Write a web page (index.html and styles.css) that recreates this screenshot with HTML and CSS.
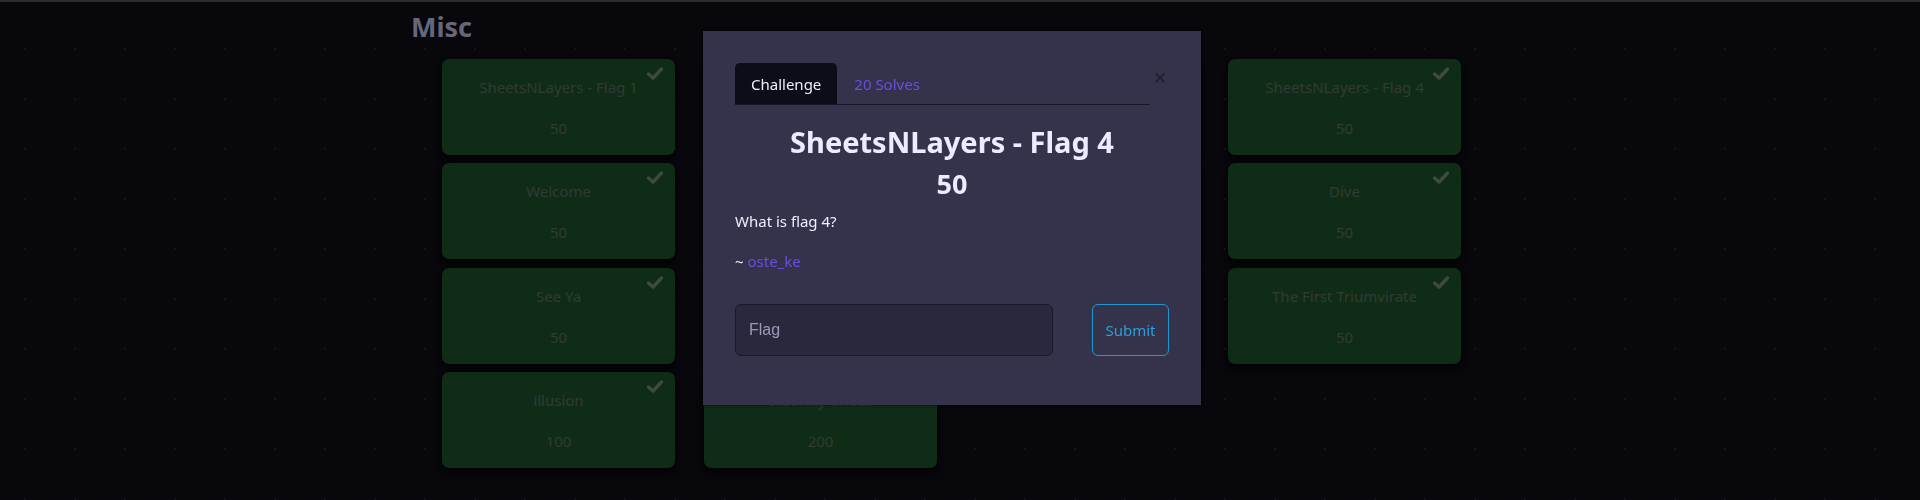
FILE: index.html
```html
<!DOCTYPE html>
<html lang="en">
<head>
<meta charset="utf-8">
<title>Misc</title>
<link rel="stylesheet" href="styles.css">
</head>
<body>
<div class="page">
  <h2 class="category">Misc</h2>
  <div class="grid">
    <div class="card"><svg class="check" viewBox="0 0 16 12"><path d="M1.5 6.5 L6 10.5 L14.5 1.5"/></svg><div class="card-title">SheetsNLayers - Flag 1</div><div class="card-value">50</div></div>
    <div class="card"><svg class="check" viewBox="0 0 16 12"><path d="M1.5 6.5 L6 10.5 L14.5 1.5"/></svg><div class="card-title">SheetsNLayers - Flag 2</div><div class="card-value">50</div></div>
    <div class="card"><svg class="check" viewBox="0 0 16 12"><path d="M1.5 6.5 L6 10.5 L14.5 1.5"/></svg><div class="card-title">SheetsNLayers - Flag 3</div><div class="card-value">50</div></div>
    <div class="card"><svg class="check" viewBox="0 0 16 12"><path d="M1.5 6.5 L6 10.5 L14.5 1.5"/></svg><div class="card-title">SheetsNLayers - Flag 4</div><div class="card-value">50</div></div>
    <div class="card"><svg class="check" viewBox="0 0 16 12"><path d="M1.5 6.5 L6 10.5 L14.5 1.5"/></svg><div class="card-title">Welcome</div><div class="card-value">50</div></div>
    <div class="card"><svg class="check" viewBox="0 0 16 12"><path d="M1.5 6.5 L6 10.5 L14.5 1.5"/></svg><div class="card-title">Discord</div><div class="card-value">50</div></div>
    <div class="card"><svg class="check" viewBox="0 0 16 12"><path d="M1.5 6.5 L6 10.5 L14.5 1.5"/></svg><div class="card-title">Survey</div><div class="card-value">50</div></div>
    <div class="card"><svg class="check" viewBox="0 0 16 12"><path d="M1.5 6.5 L6 10.5 L14.5 1.5"/></svg><div class="card-title">Dive</div><div class="card-value">50</div></div>
    <div class="card"><svg class="check" viewBox="0 0 16 12"><path d="M1.5 6.5 L6 10.5 L14.5 1.5"/></svg><div class="card-title">See Ya</div><div class="card-value">50</div></div>
    <div class="card"><svg class="check" viewBox="0 0 16 12"><path d="M1.5 6.5 L6 10.5 L14.5 1.5"/></svg><div class="card-title">Rules</div><div class="card-value">50</div></div>
    <div class="card"><svg class="check" viewBox="0 0 16 12"><path d="M1.5 6.5 L6 10.5 L14.5 1.5"/></svg><div class="card-title">Sanity Check</div><div class="card-value">50</div></div>
    <div class="card"><svg class="check" viewBox="0 0 16 12"><path d="M1.5 6.5 L6 10.5 L14.5 1.5"/></svg><div class="card-title">The First Triumvirate</div><div class="card-value">50</div></div>
    <div class="card"><svg class="check" viewBox="0 0 16 12"><path d="M1.5 6.5 L6 10.5 L14.5 1.5"/></svg><div class="card-title">illusion</div><div class="card-value">100</div></div>
    <div class="card"><div class="card-title">Insanity Check</div><div class="card-value">200</div></div>
  </div>
</div>

<div class="modal">
  <div class="modal-header">
    <div class="tabs">
      <div class="tab active">Challenge</div>
      <div class="tab link">20 Solves</div>
    </div>
    <div class="close">&#x2715;</div>
  </div>
  <h3 class="modal-title">SheetsNLayers - Flag 4</h3>
  <div class="modal-value">50</div>
  <p class="desc">What is flag 4?</p>
  <p class="author">~ <span class="author-name">oste_ke</span></p>
  <div class="submit-row">
    <div class="flag-input">Flag</div>
    <div class="submit-btn">Submit</div>
  </div>
</div>
</body>
</html>
```
FILE: styles.css
```css
html, body {
  margin: 0;
  padding: 0;
}
body {
  background-color: #07070c;
  background-image: radial-gradient(circle, #13131b 0.9px, transparent 1.3px);
  background-size: 50px 50px;
  background-position: 0px 24px;
  border-top: 2px solid #2b2b30;
  height: 498px;
  overflow: hidden;
  font-family: "Noto Sans", "Open Sans", sans-serif;
}
.page {
  padding-left: 411px;
}
.category {
  margin: 0;
  padding-top: 7px;
  height: 50px;
  font-size: 27px;
  line-height: 36px;
  font-weight: 700;
  color: #67677c;
}
.grid {
  margin-left: 31px;
  display: grid;
  grid-template-columns: repeat(4, 233px);
  grid-auto-rows: 96px;
  column-gap: 29px;
  row-gap: 8.4px;
}
.card {
  position: relative;
  background: #0f2d16;
  border-radius: 7px;
  box-shadow: 0 4px 6px rgba(0, 0, 0, 0.75);
  text-align: center;
  color: #323a34;
  font-size: 15px;
}
.check {
  position: absolute;
  right: 12px;
  top: 8px;
  width: 16px;
  height: 13px;
  fill: none;
  stroke: #3e4a40;
  stroke-width: 3.4;
  stroke-linecap: round;
  stroke-linejoin: round;
}
.card-title {
  padding-top: 17px;
  line-height: 22px;
}
.card-value {
  padding-top: 19px;
  line-height: 22px;
}
.modal {
  position: fixed;
  left: 703px;
  top: 31px;
  width: 434px;
  height: 342px;
  padding: 32px 32px 0 32px;
  background: #34334b;
  box-shadow: 0 0 2px rgba(0, 0, 0, 0.8);
}
.modal-header {
  display: flex;
  align-items: flex-start;
}
.tabs {
  display: flex;
  width: 417px;
  border-bottom: 1px solid #17172a;
}
.tab {
  height: 41px;
  line-height: 43px;
  padding: 0 16px;
  font-size: 15px;
  border-radius: 5px 5px 0 0;
}
.tab.active {
  background: #0d0d18;
  color: #efeeff;
}
.tab.link {
  color: #6a4ee2;
  padding-left: 17px;
}
.close {
  margin-left: 1px;
  width: 18px;
  padding-top: 4px;
  font-size: 17px;
  line-height: 22px;
  color: #1e1e2c;
  text-align: center;
}
.modal-title {
  margin: 17px 0 0 0;
  text-align: center;
  font-size: 29px;
  line-height: 40px;
  font-weight: 700;
  color: #ecebff;
}
.modal-value {
  margin-top: 4px;
  text-align: center;
  font-size: 27px;
  line-height: 36px;
  font-weight: 700;
  color: #ecebff;
}
.desc {
  margin: 9px 0 0 0;
  font-size: 15px;
  line-height: 20px;
  color: #eeeeff;
}
.author {
  margin: 20px 0 0 0;
  font-size: 15px;
  line-height: 20px;
  color: #eeeeff;
}
.author-name {
  color: #6a4ee2;
}
.submit-row {
  margin-top: 33px;
  display: flex;
  justify-content: space-between;
}
.flag-input {
  box-sizing: border-box;
  width: 318px;
  height: 52px;
  padding-left: 13px;
  line-height: 50px;
  background: #29283d;
  border: 1px solid #19192a;
  border-radius: 6px;
  color: #9a99b8;
  font-size: 16px;
  font-family: "Liberation Sans", Arial, sans-serif;
}
.submit-btn {
  box-sizing: border-box;
  width: 77px;
  height: 52px;
  line-height: 50px;
  text-align: center;
  border: 1px solid #1c98d4;
  border-radius: 6px;
  color: #2a9fd8;
  font-size: 15px;
}
```
